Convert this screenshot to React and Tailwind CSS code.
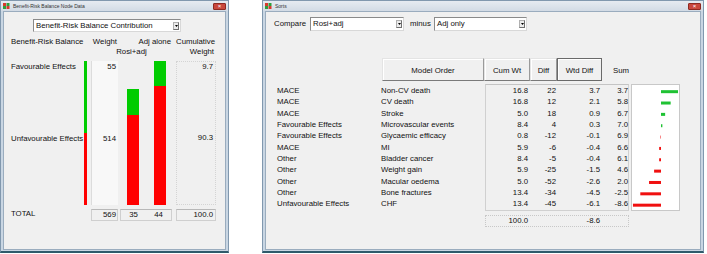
import React from 'react';

const rows = [
  ['MACE', 'Non-CV death', '16.8', '22', 3.7, '3.7'],
  ['MACE', 'CV death', '16.8', '12', 2.1, '5.8'],
  ['MACE', 'Stroke', '5.0', '18', 0.9, '6.7'],
  ['Favourable Effects', 'Microvascular events', '8.4', '4', 0.3, '7.0'],
  ['Favourable Effects', 'Glycaemic efficacy', '0.8', '-12', -0.1, '6.9'],
  ['MACE', 'MI', '5.9', '-6', -0.4, '6.6'],
  ['Other', 'Bladder cancer', '8.4', '-5', -0.4, '6.1'],
  ['Other', 'Weight gain', '5.9', '-25', -1.5, '4.6'],
  ['Other', 'Macular oedema', '5.0', '-52', -2.6, '2.0'],
  ['Other', 'Bone fractures', '13.4', '-34', -4.5, '-2.5'],
  ['Unfavourable Effects', 'CHF', '13.4', '-45', -6.1, '-8.6'],
];

const ROW_H = 11.35;

const AppIcon = () => (
  <svg width="7" height="6" viewBox="0 0 7 6">
    <rect x="0" y="0" width="3" height="3" fill="#d83a2c" />
    <rect x="3.5" y="0" width="3" height="3" fill="#2e9e3a" />
    <rect x="0" y="3" width="3" height="3" fill="#2e9e3a" />
    <rect x="3.5" y="3" width="3" height="3" fill="#d83a2c" />
  </svg>
);

const Window = ({ title, width, children }) => (
  <div className={`flex flex-col h-[253px] border border-[#8198ae] border-b-2 border-b-[#2f5a6b] bg-[#c9d6e3] ${width}`}>
    {/* Title bar */}
    <div className="h-[10px] flex items-center pl-[2px] pr-[2px] bg-gradient-to-b from-[#e6ebf1] to-[#d2dbe5]">
      <AppIcon />
      <span className="ml-[3px] text-[5px] leading-[10px] text-[#333]">{title}</span>
      <span className="ml-auto w-[13px] h-[7px] rounded-[1px] bg-[#c9483d] border border-[#8e2a22] flex items-center justify-center text-white text-[6px] leading-[6px]">
        ×
      </span>
    </div>
    <div className="flex-1 mx-[2px] mb-[1px] border border-[#9aacbe] bg-[#f0f0f0] flex flex-col">{children}</div>
  </div>
);

const Dropdown = ({ value, width, height }) => (
  <div className={`flex items-center bg-white border border-[#8a8a8a] border-r-[#d8d8d8] border-b-[#d8d8d8] ${width} ${height}`}>
    <span className="pl-[2px] flex-1 leading-[10px] whitespace-nowrap">{value}</span>
    <span className="w-[6px] h-[8px] mr-[1px] border border-[#b0b0b0] border-r-[#707070] border-b-[#707070] bg-[#ececec] flex items-center justify-center">
      <svg width="3" height="2" viewBox="0 0 3 2">
        <path d="M0 0 L3 0 L1.5 2 Z" fill="#000" />
      </svg>
    </span>
  </div>
);

const BalancePanel = () => (
  <Window title="Benefit-Risk Balance Node Data" width="w-[229px]">
    {/* Selector */}
    <div className="mt-[7px] pl-[29px]">
      <Dropdown value="Benefit-Risk Balance Contribution" width="w-[148px]" height="h-[13px]" />
    </div>

    {/* Column headers */}
    <div className="mt-[5px] flex h-[10px] leading-[10px] whitespace-nowrap pl-[7px]">
      <span className="w-[80px]">Benefit-Risk Balance</span>
      <span className="w-[27px] text-right pr-[1px]">Weight</span>
      <span className="w-[55px] text-right pr-[2px]">Adj alone</span>
      <span className="ml-[3px] w-[40px] text-right pr-[2px]">Cumulative</span>
    </div>
    <div className="flex h-[10px] leading-[10px] whitespace-nowrap pl-[111px]">
      <span className="w-[33px] text-center">Rosi+adj</span>
      <span className="w-[28px]" />
      <span className="w-[40px] text-right pr-[2px]">Weight</span>
    </div>

    {/* Chart */}
    <div className="mt-[4px] h-[144px] flex pl-[7px]">
      <div className="w-[73px] flex flex-col whitespace-nowrap">
        <div className="flex-1 pt-[1px] leading-[9px]">Favourable Effects</div>
        <div className="flex-1 pt-[1px] leading-[9px]">Unfavourable Effects</div>
      </div>
      <div className="w-[3px] flex flex-col">
        <div className="flex-1 bg-[#00cc00]" />
        <div className="flex-1 bg-[#ff0000]" />
      </div>
      <div className="ml-[4px] w-[27px] flex flex-col bg-[#f8f8f8] border-l border-[#dcdcdc]">
        <div className="flex-1 pt-[1px] leading-[9px] text-right pr-[2px]">55</div>
        <div className="flex-1 pt-[1px] leading-[9px] text-right pr-[2px]">514</div>
      </div>
      <div className="ml-[9px] w-[12px] flex flex-col justify-end">
        <div className="h-[26px] bg-[#00cc00]" />
        <div className="h-[90px] bg-[#ff0000]" />
      </div>
      <div className="ml-[15px] w-[12px] flex flex-col justify-end">
        <div className="h-[25px] bg-[#00cc00]" />
        <div className="h-[119px] bg-[#ff0000]" />
      </div>
      <div className="ml-[10px] w-[40px] flex flex-col border border-dotted border-[#d4d4d4]">
        <div className="flex-1 leading-[9px] text-right pr-[2px]">9.7</div>
        <div className="flex-1 leading-[9px] text-right pr-[2px]">90.3</div>
      </div>
    </div>

    {/* Totals */}
    <div className="mt-[4px] h-[12px] flex pl-[7px] leading-[10px]">
      <span className="w-[80px]">TOTAL</span>
      <span className="w-[27px] text-right pr-[1px] border border-[#cfcfcf] border-t-[#b8b8b8]">569</span>
      <span className="ml-[2px] w-[52px] grid grid-cols-2 text-center border border-[#cfcfcf] border-t-[#b8b8b8]">
        <span>35</span>
        <span>44</span>
      </span>
      <span className="ml-[4px] w-[40px] text-right pr-[2px] border border-[#cfcfcf] border-t-[#b8b8b8]">100.0</span>
    </div>
  </Window>
);

const HeaderButton = ({ label, width, pressed }) => (
  <div
    className={`${width} h-[23px] flex items-center justify-center pt-[2px] bg-[#f0f0f0] ${
      pressed
        ? 'border border-[#6a6a6a] shadow-[inset_1px_1px_0_#ffffff]'
        : 'border border-[#e4e4e4] border-r-[#9a9a9a] border-b-[#7a7a7a] shadow-[inset_1px_1px_0_#ffffff]'
    }`}
  >
    {label}
  </div>
);

const SumChart = () => {
  const zero = 29;
  const scale = 4.6;
  return (
    <svg width="47" height="125" viewBox="0 0 47 125">
      {rows.map((r, i) => {
        const v = r[4];
        const w = Math.max(Math.abs(v) * scale, 1);
        const y = 1 + ROW_H * i + ROW_H / 2 - 1.5;
        return (
          <rect
            key={i}
            x={v >= 0 ? zero : zero - w}
            y={y}
            width={w}
            height="3"
            fill={v >= 0 ? '#1fc233' : '#f01010'}
            opacity={Math.abs(v) < 0.2 ? 0.5 : 1}
          />
        );
      })}
    </svg>
  );
};

const SortsPanel = () => (
  <Window title="Sorts" width="w-[442px]">
    {/* Compare selectors */}
    <div className="mt-[5px] h-[14px] flex items-center pl-[8px] whitespace-nowrap">
      <span className="w-[36px] leading-[10px]">Compare</span>
      <Dropdown value="Rosi+adj" width="w-[94px]" height="h-[14px]" />
      <span className="ml-[6px] w-[24px] leading-[10px]">minus</span>
      <Dropdown value="Adj only" width="w-[93px]" height="h-[14px]" />
    </div>

    {/* Sort buttons */}
    <div className="mt-[27px] flex pl-[116px] whitespace-nowrap">
      <HeaderButton label="Model Order" width="w-[102px]" />
      <HeaderButton label="Cum Wt" width="w-[46px]" />
      <HeaderButton label="Diff" width="w-[27px]" />
      <HeaderButton label="Wtd Diff" width="w-[45px]" pressed />
      <span className="w-[27px] h-[23px] pt-[2px] flex items-center justify-end">Sum</span>
    </div>

    {/* Sorted rows */}
    <div className="mt-[3px] h-[127px] flex pl-[11px] whitespace-nowrap">
      <div className="w-[104px] pt-[1px]">
        {rows.map((r, i) => (
          <div key={i} className="h-[11.35px] leading-[11.35px]">{r[0]}</div>
        ))}
      </div>
      <div className="w-[104px] pt-[1px]">
        {rows.map((r, i) => (
          <div key={i} className="h-[11.35px] leading-[11.35px]">{r[1]}</div>
        ))}
      </div>
      <div className="w-[144px] border border-[#d0d0d0] border-t-[#c4c4c4]">
        {rows.map((r, i) => (
          <div key={i} className="grid grid-cols-[42px_28px_44px_28px] h-[11.35px] leading-[11.35px] text-right">
            <span>{r[2]}</span>
            <span>{r[3]}</span>
            <span>{r[4].toFixed(1)}</span>
            <span>{r[5]}</span>
          </div>
        ))}
      </div>
      <div className="ml-[2px] w-[49px] border border-[#c8c8c8] bg-white">
        <SumChart />
      </div>
    </div>

    {/* Totals */}
    <div className="mt-[4px] pl-[219px]">
      <div className="w-[144px] h-[12px] grid grid-cols-[42px_28px_44px_28px] leading-[10px] text-right border border-dotted border-[#c8c8c8]">
        <span>100.0</span>
        <span />
        <span>-8.6</span>
        <span />
      </div>
    </div>
  </Window>
);

export default function App() {
  return (
    <div className="w-[707px] h-[254px] bg-white flex gap-[33px] text-[7.8px] text-[#111] font-['Liberation_Sans',Arial,sans-serif]">
      <BalancePanel />
      <SortsPanel />
    </div>
  );
}
